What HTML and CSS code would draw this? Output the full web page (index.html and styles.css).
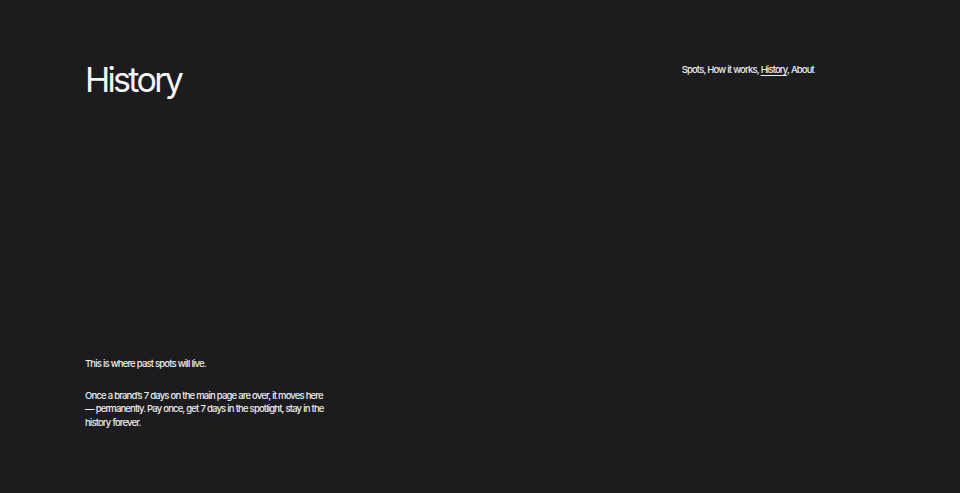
FILE: index.html
```html
<!DOCTYPE html>
<html lang="en">
<head>
<meta charset="utf-8">
<title>History</title>
<link rel="stylesheet" href="styles.css">
</head>
<body>
<div class="page">
  <header class="top">
    <h1 class="title">History</h1>
    <nav class="nav">
      <a href="#">Spots</a>, <a href="#">How it works</a>, <a href="#" class="current">History</a>, <a href="#">About</a>
    </nav>
  </header>
  <main class="intro">
    <p class="lead">This is where past spots will live.</p>
    <p class="desc">Once a brand’s 7 days on the main page are over, it moves here — permanently. Pay once, get 7 days in the spotlight, stay in the history forever.</p>
  </main>
</div>
</body>
</html>
```
FILE: styles.css
```css
html, body {
  margin: 0;
  padding: 0;
  background: #1c1c1f;
  color: #f2f2f2;
  font-family: Inter, "Liberation Sans", sans-serif;
}
.page {
  height: 493px;
  box-sizing: border-box;
  padding: 58px 85px 0 85px;
  display: flex;
  flex-direction: column;
}
.top {
  display: flex;
  justify-content: space-between;
  align-items: flex-start;
}
.title {
  margin: 0;
  font-size: 34px;
  font-weight: 400;
  letter-spacing: -2.7px;
  line-height: 44px;
  color: #f5f5f5;
}
.nav {
  margin-right: 61px;
  margin-top: 5px;
  font-size: 9.5px;
  font-weight: 500;
  letter-spacing: -0.85px;
  word-spacing: 0.3px;
  line-height: 14px;
  color: #ececec;
}
.nav a {
  color: inherit;
  text-decoration: none;
}
.nav a.current {
  text-decoration: underline;
  text-decoration-thickness: 1px;
  text-underline-offset: 2px;
}
.intro {
  margin-top: 255px;
  width: 245px;
}
.intro p {
  margin: 0;
  font-size: 9.5px;
  font-weight: 500;
  line-height: 13.5px;
  letter-spacing: -0.85px;
  word-spacing: 0.3px;
  color: #ececec;
}
.intro .desc {
  margin-top: 18px;
}
```
